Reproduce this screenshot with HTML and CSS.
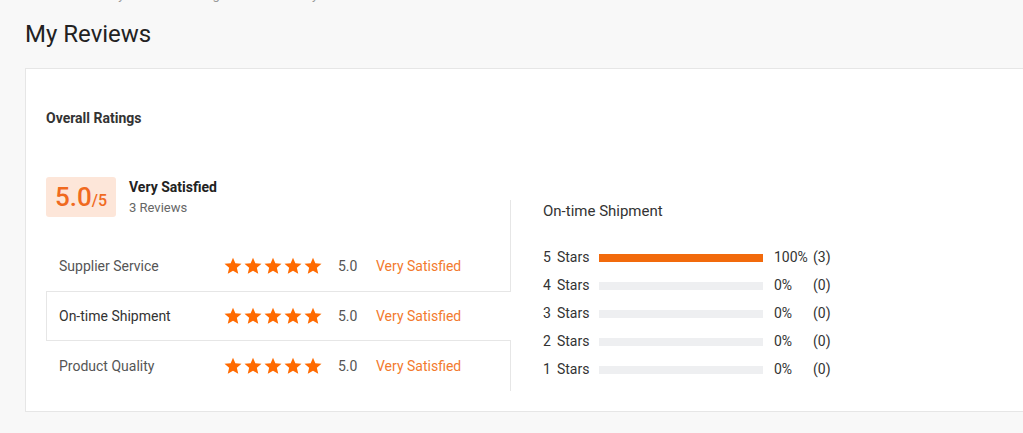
FILE: index.html
```html
<!DOCTYPE html>
<html lang="en">
<head>
<meta charset="utf-8">
<title>My Reviews</title>
<link rel="stylesheet" href="styles.css">
</head>
<body>
<div class="page">
  <div class="crumbs">Home / My Alibaba / Ratings &amp; Reviews / My Reviews</div>
  <h1 class="title">My Reviews</h1>
  <section class="card">
    <h2 class="card-title">Overall Ratings</h2>
    <div class="ratings">
      <div class="left">
        <div class="summary">
          <div class="score"><span class="score-num">5.0</span><span class="score-max">/5</span></div>
          <div class="summary-text">
            <div class="summary-level">Very Satisfied</div>
            <div class="summary-count">3 Reviews</div>
          </div>
        </div>
        <ul class="rows">
          <li class="row">
            <span class="row-label">Supplier Service</span>
            <span class="stars">
              <svg viewBox="0 0 24 24"><path d="M12 17.6l6.3 3.8-1.7-7.2 5.6-4.8-7.4-.6L12 2 9.2 8.8l-7.4.6 5.6 4.8-1.7 7.2z"/></svg>
              <svg viewBox="0 0 24 24"><path d="M12 17.6l6.3 3.8-1.7-7.2 5.6-4.8-7.4-.6L12 2 9.2 8.8l-7.4.6 5.6 4.8-1.7 7.2z"/></svg>
              <svg viewBox="0 0 24 24"><path d="M12 17.6l6.3 3.8-1.7-7.2 5.6-4.8-7.4-.6L12 2 9.2 8.8l-7.4.6 5.6 4.8-1.7 7.2z"/></svg>
              <svg viewBox="0 0 24 24"><path d="M12 17.6l6.3 3.8-1.7-7.2 5.6-4.8-7.4-.6L12 2 9.2 8.8l-7.4.6 5.6 4.8-1.7 7.2z"/></svg>
              <svg viewBox="0 0 24 24"><path d="M12 17.6l6.3 3.8-1.7-7.2 5.6-4.8-7.4-.6L12 2 9.2 8.8l-7.4.6 5.6 4.8-1.7 7.2z"/></svg>
            </span>
            <span class="row-score">5.0</span>
            <span class="row-level">Very Satisfied</span>
          </li>
          <li class="row active">
            <span class="row-label">On-time Shipment</span>
            <span class="stars">
              <svg viewBox="0 0 24 24"><path d="M12 17.6l6.3 3.8-1.7-7.2 5.6-4.8-7.4-.6L12 2 9.2 8.8l-7.4.6 5.6 4.8-1.7 7.2z"/></svg>
              <svg viewBox="0 0 24 24"><path d="M12 17.6l6.3 3.8-1.7-7.2 5.6-4.8-7.4-.6L12 2 9.2 8.8l-7.4.6 5.6 4.8-1.7 7.2z"/></svg>
              <svg viewBox="0 0 24 24"><path d="M12 17.6l6.3 3.8-1.7-7.2 5.6-4.8-7.4-.6L12 2 9.2 8.8l-7.4.6 5.6 4.8-1.7 7.2z"/></svg>
              <svg viewBox="0 0 24 24"><path d="M12 17.6l6.3 3.8-1.7-7.2 5.6-4.8-7.4-.6L12 2 9.2 8.8l-7.4.6 5.6 4.8-1.7 7.2z"/></svg>
              <svg viewBox="0 0 24 24"><path d="M12 17.6l6.3 3.8-1.7-7.2 5.6-4.8-7.4-.6L12 2 9.2 8.8l-7.4.6 5.6 4.8-1.7 7.2z"/></svg>
            </span>
            <span class="row-score">5.0</span>
            <span class="row-level">Very Satisfied</span>
          </li>
          <li class="row">
            <span class="row-label">Product Quality</span>
            <span class="stars">
              <svg viewBox="0 0 24 24"><path d="M12 17.6l6.3 3.8-1.7-7.2 5.6-4.8-7.4-.6L12 2 9.2 8.8l-7.4.6 5.6 4.8-1.7 7.2z"/></svg>
              <svg viewBox="0 0 24 24"><path d="M12 17.6l6.3 3.8-1.7-7.2 5.6-4.8-7.4-.6L12 2 9.2 8.8l-7.4.6 5.6 4.8-1.7 7.2z"/></svg>
              <svg viewBox="0 0 24 24"><path d="M12 17.6l6.3 3.8-1.7-7.2 5.6-4.8-7.4-.6L12 2 9.2 8.8l-7.4.6 5.6 4.8-1.7 7.2z"/></svg>
              <svg viewBox="0 0 24 24"><path d="M12 17.6l6.3 3.8-1.7-7.2 5.6-4.8-7.4-.6L12 2 9.2 8.8l-7.4.6 5.6 4.8-1.7 7.2z"/></svg>
              <svg viewBox="0 0 24 24"><path d="M12 17.6l6.3 3.8-1.7-7.2 5.6-4.8-7.4-.6L12 2 9.2 8.8l-7.4.6 5.6 4.8-1.7 7.2z"/></svg>
            </span>
            <span class="row-score">5.0</span>
            <span class="row-level">Very Satisfied</span>
          </li>
        </ul>
      </div>
      <div class="panel">
        <h3 class="panel-title">On-time Shipment</h3>
        <ul class="dist">
          <li class="dist-row"><span class="dist-label"><span class="dist-n">5</span>Stars</span><span class="bar"><span class="bar-fill" style="width:100%"></span></span><span class="dist-pct">100%</span><span class="dist-count">(3)</span></li>
          <li class="dist-row"><span class="dist-label"><span class="dist-n">4</span>Stars</span><span class="bar"><span class="bar-fill" style="width:0%"></span></span><span class="dist-pct">0%</span><span class="dist-count">(0)</span></li>
          <li class="dist-row"><span class="dist-label"><span class="dist-n">3</span>Stars</span><span class="bar"><span class="bar-fill" style="width:0%"></span></span><span class="dist-pct">0%</span><span class="dist-count">(0)</span></li>
          <li class="dist-row"><span class="dist-label"><span class="dist-n">2</span>Stars</span><span class="bar"><span class="bar-fill" style="width:0%"></span></span><span class="dist-pct">0%</span><span class="dist-count">(0)</span></li>
          <li class="dist-row"><span class="dist-label"><span class="dist-n">1</span>Stars</span><span class="bar"><span class="bar-fill" style="width:0%"></span></span><span class="dist-pct">0%</span><span class="dist-count">(0)</span></li>
        </ul>
      </div>
    </div>
  </section>
</div>
</body>
</html>
```

FILE: styles.css
```css
* { box-sizing: border-box; }
html, body { margin: 0; padding: 0; }
body {
  background: #f8f8f8;
  font-family: Roboto, "Liberation Sans", Arial, sans-serif;
  color: #333;
  overflow: hidden;
  width: 1023px;
  height: 433px;
}
.page {
  padding-left: 25px;
}
.crumbs {
  margin-top: -13px;
  height: 16px;
  line-height: 16px;
  font-size: 13px;
  color: #999;
  padding-left: 35px;
  white-space: nowrap;
}
.title {
  margin: 17px 0 0 0;
  font-size: 24px;
  line-height: 28px;
  font-weight: 400;
  color: #222;
}
.card {
  margin-top: 20px;
  width: 1020px;
  background: #fff;
  border: 1px solid #e6e6e6;
  padding: 39px 0 20px 20px;
}
.card-title {
  margin: 0;
  font-size: 14px;
  line-height: 20px;
  font-weight: 700;
  color: #333;
}
.ratings {
  display: flex;
  margin-top: 49px;
}
.left {
  width: 464px;
  flex: none;
}
.summary {
  display: flex;
  align-items: flex-start;
  height: 40px;
}
.score {
  width: 70px;
  height: 40px;
  background: #fde6d9;
  border-radius: 3px;
  color: #f06a1f;
  display: flex;
  align-items: baseline;
  justify-content: center;
  padding-top: 1px;
}
.score-num {
  font-size: 26px;
  line-height: 38px;
  font-weight: 500;
}
.score-max {
  font-size: 16px;
  font-weight: 500;
}
.summary-text {
  margin-left: 13px;
}
.summary-level {
  font-size: 14px;
  font-weight: 700;
  line-height: 18px;
  color: #222;
  margin-top: 1px;
}
.summary-count {
  font-size: 13px;
  line-height: 18px;
  color: #666;
  margin-top: 3px;
}
.rows {
  list-style: none;
  margin: 24px 0 0 0;
  padding: 0;
}
.row {
  display: flex;
  align-items: center;
  height: 50px;
  border: 1px solid transparent;
  border-right: 0;
  padding-left: 12px;
  font-size: 14px;
}
.row.active {
  position: relative;
  z-index: 1;
  margin-right: -1px;
  background: #fff;
  border-color: #e6e6e6;
}
.row-label {
  width: 164px;
  color: #555;
}
.row.active .row-label { color: #333; }
.stars {
  width: 115px;
  display: flex;
}
.stars svg {
  width: 20px;
  height: 20px;
  fill: #ff6a00;
}
.row-score {
  width: 38px;
  color: #555;
}
.row-level {
  color: #f37a2d;
}
.panel {
  flex: 1;
  margin-top: 23px;
  border-left: 1px solid #e6e6e6;
  padding-left: 32px;
}
.panel-title {
  margin: 0;
  font-size: 15px;
  line-height: 22px;
  font-weight: 400;
  color: #333;
}
.dist {
  list-style: none;
  margin: 21px 0 0 0;
  padding: 0;
}
.dist-row {
  display: flex;
  align-items: center;
  height: 28px;
  font-size: 14px;
  color: #333;
}
.dist-label {
  width: 56px;
}
.dist-n {
  margin-right: 6px;
}
.bar {
  width: 164px;
  height: 8px;
  background: #eeeff1;
  margin-top: 2px;
}
.bar-fill {
  display: block;
  height: 100%;
  background: #f26a0c;
}
.dist-pct {
  width: 39px;
  margin-left: 11px;
}
```
